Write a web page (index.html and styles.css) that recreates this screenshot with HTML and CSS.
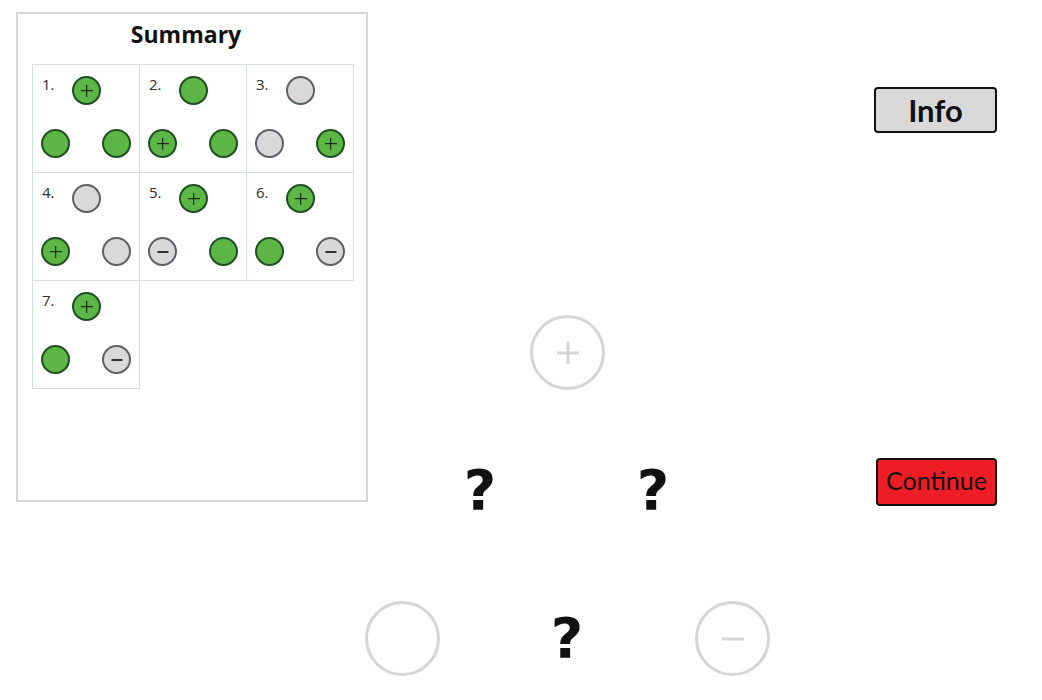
FILE: index.html
```html
<!DOCTYPE html>
<html>
<head>
<meta charset="utf-8">
<link rel="stylesheet" href="styles.css">
</head>
<body>
<div class="page">
  <section class="summary">
    <h1 class="summary-title">Summary</h1>
    <div class="grid">
      <div class="cell">
        <div class="top"><span class="num">1.</span><span class="dot green plus"></span></div>
        <div class="bottom"><span class="dot green"></span><span class="dot green"></span></div>
      </div>
      <div class="cell">
        <div class="top"><span class="num">2.</span><span class="dot green"></span></div>
        <div class="bottom"><span class="dot green plus"></span><span class="dot green"></span></div>
      </div>
      <div class="cell">
        <div class="top"><span class="num">3.</span><span class="dot gray"></span></div>
        <div class="bottom"><span class="dot gray"></span><span class="dot green plus"></span></div>
      </div>
      <div class="cell">
        <div class="top"><span class="num">4.</span><span class="dot gray"></span></div>
        <div class="bottom"><span class="dot green plus"></span><span class="dot gray"></span></div>
      </div>
      <div class="cell">
        <div class="top"><span class="num">5.</span><span class="dot green plus"></span></div>
        <div class="bottom"><span class="dot gray minus"></span><span class="dot green"></span></div>
      </div>
      <div class="cell">
        <div class="top"><span class="num">6.</span><span class="dot green plus"></span></div>
        <div class="bottom"><span class="dot green"></span><span class="dot gray minus"></span></div>
      </div>
      <div class="cell">
        <div class="top"><span class="num">7.</span><span class="dot green plus"></span></div>
        <div class="bottom"><span class="dot green"></span><span class="dot gray minus"></span></div>
      </div>
    </div>
  </section>

  <main class="stage">
    <div class="ring ring-top big-plus"></div>
    <div class="q q-left">?</div>
    <div class="q q-right">?</div>
    <div class="ring ring-bl"></div>
    <div class="q q-bottom">?</div>
    <div class="ring ring-br big-minus"></div>
  </main>

  <aside class="side">
    <button class="btn btn-info">Info</button>
    <button class="btn btn-continue">Continue</button>
  </aside>
</div>
</body>
</html>
```

FILE: styles.css
```css
* { box-sizing: border-box; }
html, body { margin: 0; padding: 0; background: #ffffff; }
body { font-family: "Open Sans", "Liberation Sans", sans-serif; color: #111; }

.page {
  display: flex;
  width: 1042px;
  height: 700px;
}

/* Summary panel */
.summary {
  margin: 12px 0 0 16px;
  width: 352px;
  height: 490px;
  border: 2px solid #d4d8db;
  padding: 0 0 0 14px;
  flex: none;
}
.summary-title {
  margin: 0;
  padding-top: 4px;
  height: 50px;
  text-align: center;
  font-family: "Open Sans", sans-serif;
  font-weight: 700;
  font-size: 23px;
  line-height: 32px;
  color: #111;
  padding-right: 26px;
}
.grid {
  display: grid;
  grid-template-columns: repeat(3, 107px);
  grid-auto-rows: 108px;
}
.cell {
  border: 1px solid #d3dfe6;
  margin: 0 -1px -1px 0;
  padding: 10px 8px 0 8px;
}
.top {
  display: flex;
  align-items: flex-start;
  height: 29px;
  padding-top: 1px;
}
.num {
  width: 31px;
  font-family: "Open Sans", sans-serif;
  font-size: 15px;
  line-height: 16px;
  color: #2e2e2e;
  padding-left: 1px;
}
.bottom {
  display: flex;
  justify-content: space-between;
  margin-top: 25px;
}

.dot {
  position: relative;
  width: 29px;
  height: 29px;
  border-radius: 50%;
  flex: none;
}
.green { background: #5cb646; border: 2px solid #1f4f22; }
.gray { background: #d9d9d9; border: 2px solid #5b6164; }
.plus::before, .plus::after, .minus::before {
  content: "";
  position: absolute;
  left: 50%;
  top: 50%;
  background: #111;
}
.plus::before { width: 12px; height: 1.6px; transform: translate(-50%, -50%); }
.plus::after { width: 1.6px; height: 12px; transform: translate(-50%, -50%); }
.minus::before { width: 11px; height: 2px; background: #333; transform: translate(-50%, -50%); }

/* Stage */
.stage {
  position: relative;
  flex: 1;
}
.ring {
  position: absolute;
  width: 75px;
  height: 75px;
  border-radius: 50%;
  border: 3px solid #d2d6d9;
}
.ring-top { left: 162px; top: 315px; }
.ring-bl { left: -3px; top: 601px; }
.ring-br { left: 327px; top: 601px; }
.big-plus::before, .big-plus::after, .big-minus::before {
  content: "";
  position: absolute;
  left: 50%;
  top: 50%;
  background: #d2d6d9;
  transform: translate(-50%, -50%);
}
.big-plus::before { width: 22px; height: 3px; }
.big-plus::after { width: 3px; height: 22px; }
.big-minus::before { width: 22px; height: 3px; }

.q {
  position: absolute;
  width: 40px;
  text-align: center;
  font-family: "DejaVu Sans", sans-serif;
  font-weight: 700;
  font-size: 56px;
  line-height: 56px;
  color: #111;
}
.q-left { left: 92px; top: 462px; }
.q-right { left: 265px; top: 462px; }
.q-bottom { left: 179px; top: 610px; }

/* Side buttons */
.side {
  flex: none;
  width: 168px;
  display: flex;
  flex-direction: column;
  align-items: flex-start;
  padding-top: 87px;
}
.btn {
  margin: 0;
  padding: 0;
  border: 2px solid #111;
  border-radius: 4px;
  color: #111;
  cursor: pointer;
}
.btn-info {
  width: 123px;
  height: 46px;
  background: #d9d9d9;
  font-family: "Lato", sans-serif;
  font-weight: 700;
  font-size: 31px;
  line-height: 40px;
}
.btn-continue {
  margin-top: 325px;
  margin-left: 2px;
  width: 121px;
  height: 48px;
  background: #ee1c25;
  font-family: "Lato", sans-serif;
  font-size: 25px;
  line-height: 38px;
  padding-bottom: 4px;
}
```
